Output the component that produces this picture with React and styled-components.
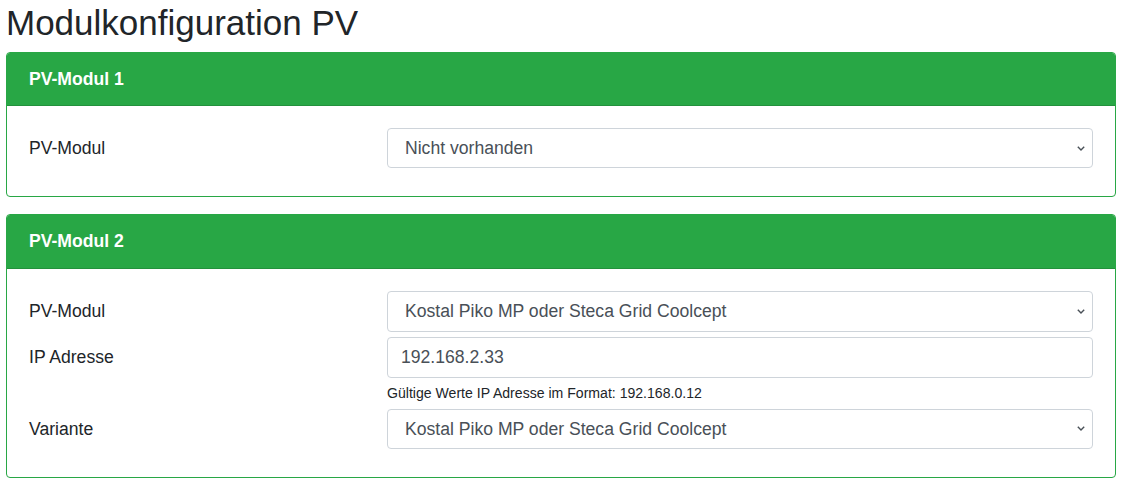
import React from "react";
import styled, { createGlobalStyle } from "styled-components";

const GlobalStyle = createGlobalStyle`
  html, body {
    margin: 0;
    padding: 0;
    background: #ffffff;
  }
  body {
    font-family: "Liberation Sans", Arial, sans-serif;
    font-size: 17.6px;
    line-height: 1.5;
    color: #212529;
  }
  * {
    box-sizing: border-box;
  }
`;

const chevron =
  "url(\"data:image/svg+xml,%3Csvg xmlns='http://www.w3.org/2000/svg' width='8' height='5' viewBox='0 0 8 5'%3E%3Cpolyline points='0.8,0.8 4,4 7.2,0.8' fill='none' stroke='%23495057' stroke-width='1.4'/%3E%3C/svg%3E\")";

const Page = styled.div`
  padding: 0 5px 0 6px;
`;

const Title = styled.h1`
  margin: 2px 0 8px;
  font-size: 35px;
  font-weight: 400;
  line-height: 1.2;
  color: #212529;
`;

const Card = styled.section`
  border: 1px solid #28a745;
  border-radius: 4px;
  overflow: hidden;
  margin-bottom: 17px;
`;

const CardHeader = styled.div`
  background: #28a745;
  color: #ffffff;
  font-weight: 700;
  padding: 13px 22px 13px;
  line-height: 1.5;
  border-bottom: 1px solid #23913c;
`;

const CardBody = styled.div`
  padding: 22px 22px 28px;
  display: flex;
  flex-direction: column;
  gap: 5px;
`;

const FormRow = styled.div`
  display: grid;
  grid-template-columns: 358px 1fr;
  align-items: start;
`;

const Label = styled.label`
  line-height: ${({ $h }) => $h || 41}px;
  height: ${({ $h }) => $h || 41}px;
`;

const Field = styled.div`
  display: flex;
  flex-direction: column;
`;

const Select = styled.select`
  appearance: none;
  -webkit-appearance: none;
  width: 100%;
  height: ${({ $h }) => $h || 41}px;
  padding: 0 24px 0 17px;
  font-family: "Liberation Sans", Arial, sans-serif;
  font-size: 17.6px;
  color: #495057;
  background: #ffffff ${chevron} no-repeat right 7px center / 8px 5px;
  border: 1px solid #ced4da;
  border-radius: 4px;
  outline: none;
`;

const Input = styled.input`
  width: 100%;
  height: 41px;
  padding: 0 13px;
  font-family: "Liberation Sans", Arial, sans-serif;
  font-size: 17.6px;
  color: #495057;
  background-color: #ffffff;
  border: 1px solid #ced4da;
  border-radius: 4px;
  outline: none;
`;

const Help = styled.small`
  display: block;
  margin-top: 5px;
  font-size: 14.08px;
  line-height: 21px;
  color: #212529;
`;

const SelectRow = ({ label, value, options, h }) => (
  <FormRow>
    <Label $h={h}>{label}</Label>
    <Select $h={h} defaultValue={value}>
      {options.map((o) => (
        <option key={o}>{o}</option>
      ))}
    </Select>
  </FormRow>
);

const modules = [
  "Nicht vorhanden",
  "Kostal Piko MP oder Steca Grid Coolcept",
  "SMA Webbox",
  "Fronius",
];

export default function App() {
  return (
    <>
      <GlobalStyle />
      <Page>
        <Title>Modulkonfiguration PV</Title>
        <Card>
          <CardHeader>PV-Modul 1</CardHeader>
          <CardBody>
            <SelectRow label="PV-Modul" value="Nicht vorhanden" options={modules} h={40} />
          </CardBody>
        </Card>
        <Card>
          <CardHeader>PV-Modul 2</CardHeader>
          <CardBody>
            <SelectRow
              label="PV-Modul"
              value="Kostal Piko MP oder Steca Grid Coolcept"
              options={modules}
            />
            <FormRow>
              <Label>IP Adresse</Label>
              <Field>
                <Input defaultValue="192.168.2.33" />
                <Help>Gültige Werte IP Adresse im Format: 192.168.0.12</Help>
              </Field>
            </FormRow>
            <SelectRow
              label="Variante"
              value="Kostal Piko MP oder Steca Grid Coolcept"
              options={["Kostal Piko MP oder Steca Grid Coolcept", "Kostal Piko MP plus"]}
              h={40}
            />
          </CardBody>
        </Card>
      </Page>
    </>
  );
}
